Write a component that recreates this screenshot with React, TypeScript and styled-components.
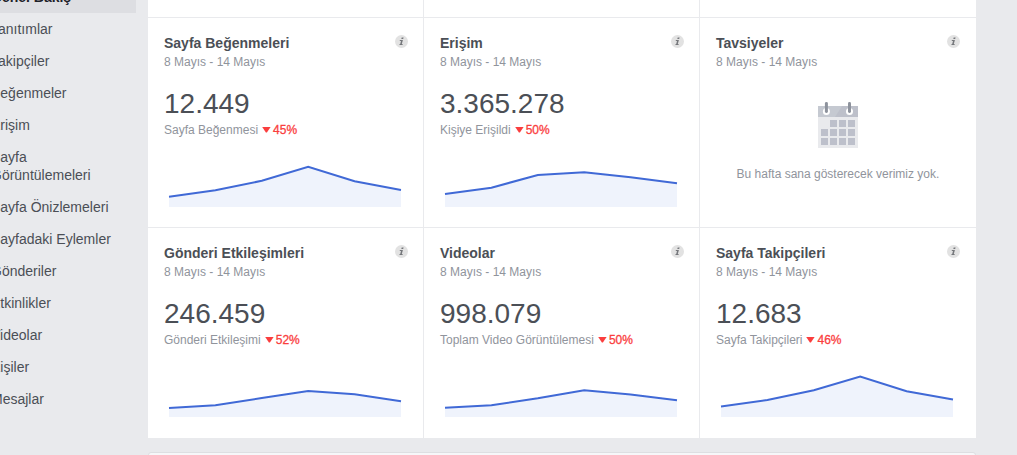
import React from "react";
import styled, { createGlobalStyle } from "styled-components";

const GlobalStyle = createGlobalStyle`
  * { box-sizing: border-box; }
  body {
    margin: 0;
    background: #e9ebee;
    font-family: "Liberation Sans", Arial, Helvetica, sans-serif;
    color: #4b4f56;
  }
`;

const Page = styled.div`
  display: flex;
  width: 1017px;
  height: 455px;
  overflow: hidden;
  background: #e9eaed;
`;

const Sidebar = styled.nav`
  flex: none;
  width: 157px;
  margin: -19px 12px 0 -21px;
`;

const SidebarItem = styled.div<{ $active?: boolean }>`
  padding: 7px 12px;
  font-size: 14px;
  line-height: 18px;
  color: ${(p) => (p.$active ? "#1d2129" : "#4b4f56")};
  font-weight: ${(p) => (p.$active ? 700 : 400)};
  background: ${(p) => (p.$active ? "#dddee2" : "transparent")};
`;

const Main = styled.main`
  flex: none;
  width: 828px;
`;

const CardGrid = styled.section`
  display: grid;
  grid-template-columns: repeat(3, 276px);
  grid-template-rows: 17px 210px 211px;
  background: #fff;
`;

const Cell = styled.div`
  border-right: 1px solid #e9eaed;
  &:nth-child(3n) {
    border-right: 0;
  }
`;

const Card = styled(Cell)`
  display: flex;
  flex-direction: column;
  border-top: 1px solid #e9eaed;
  padding: 16px 15px 0 16px;
  &:nth-child(3n) {
    padding-right: 16px;
  }
`;

const CardHeader = styled.header`
  display: flex;
  justify-content: space-between;
  height: 18px;
`;

const Title = styled.h3`
  margin: 0;
  font-size: 14px;
  line-height: 18px;
  font-weight: 700;
`;

const InfoSvg = styled.svg`
  display: block;
  margin-top: 1px;
`;

const Period = styled.div`
  font-size: 12px;
  line-height: 20px;
  color: #90949c;
`;

const Value = styled.div`
  margin-top: 16px;
  font-size: 28px;
  line-height: 32px;
`;

const Caption = styled.div`
  display: flex;
  align-items: center;
  font-size: 12px;
  line-height: 20px;
  color: #90949c;
`;

const Triangle = styled.svg`
  margin: 0 2px 0 4px;
`;

const Change = styled.span`
  color: #fa3e3e;
  -webkit-text-stroke: 0.3px #fa3e3e;
`;

const Chart = styled.svg`
  display: block;
  margin: 17px 0 0 5px;
  overflow: visible;
`;

const Empty = styled.div`
  display: flex;
  flex-direction: column;
  align-items: center;
  margin-top: 30px;
  font-size: 12px;
  line-height: 20px;
  color: #90949c;
`;

const EmptyText = styled.div`
  margin-top: 16px;
`;

const NextPanel = styled.section`
  height: 40px;
  margin-top: 14px;
  border: 1px solid #dddfe2;
  border-radius: 3px;
  background: #f6f7f9;
`;

const InfoIcon = () => (
  <InfoSvg width="13" height="13" viewBox="0 0 13 13">
    <circle cx="6.5" cy="6.5" r="6.5" fill="#e2e2e2" />
    <path d="M6.7 2.4h1.9l-.4 1.6H6.3z" fill="#75777b" />
    <path d="M4.9 5h3L6.8 9h.9l-.2.9H4.4l.2-.8h.6L6 5.9H4.7z" fill="#75777b" />
  </InfoSvg>
);

const squares = [
  [12, 18], [21, 18], [30, 18],
  [3, 27], [12, 27], [21, 27], [30, 27],
  [3, 36], [12, 36], [21, 36], [30, 36],
];

const CalendarIcon = () => (
  <svg width="40" height="46" viewBox="0 0 40 46">
    <rect y="4" width="40" height="42" fill="#e9eaed" />
    <rect y="4" width="40" height="11" fill="#bdc0ca" />
    <path d="M0 4h24L17 15H0z" fill="#c5c9d1" />
    {squares.map(([x, y]) => (
      <rect key={`${x}-${y}`} x={x} y={y} width="7" height="7" fill="#bdc0cb" />
    ))}
    {[8.4, 31.5].map((x) => (
      <g key={x}>
        <circle cx={x} cy="9.6" r="3.5" fill="#fff" />
        <rect x={x - 1.5} y="0" width="3" height="11" rx="1.4" fill="#8d929c" />
      </g>
    ))}
  </svg>
);

const Sparkline = ({ points }: { points: number[] }) => {
  const line = points.map((y, i) => `${(i * 232) / 5},${y}`).join(" ");
  return (
    <Chart width="232" height="50" viewBox="0 0 232 50">
      <polygon points={`0,50 ${line} 232,50`} fill="#eff3fc" />
      <polyline points={line} fill="none" stroke="#4069d6" strokeWidth="2" />
    </Chart>
  );
};

type Metric = {
  title: string;
  value?: string;
  label?: string;
  change?: string;
  points?: number[];
};

const metrics: Metric[] = [
  { title: "Sayfa Beğenmeleri", value: "12.449", label: "Sayfa Beğenmesi", change: "45%", points: [39.7, 33.2, 23.8, 9.7, 24.3, 33] },
  { title: "Erişim", value: "3.365.278", label: "Kişiye Erişildi", change: "50%", points: [37, 30.7, 18, 15.3, 20.2, 26.2] },
  { title: "Tavsiyeler" },
  { title: "Gönderi Etkileşimleri", value: "246.459", label: "Gönderi Etkileşimi", change: "52%", points: [41, 38.3, 31, 24.1, 27.3, 34.3] },
  { title: "Videolar", value: "998.079", label: "Toplam Video Görüntülemesi", change: "50%", points: [40.8, 38.2, 31.3, 23.3, 27.4, 33.3] },
  { title: "Sayfa Takipçileri", value: "12.683", label: "Sayfa Takipçileri", change: "46%", points: [39.5, 33, 23.3, 9.5, 24.3, 32.5] },
];

const MetricCard = ({ title, value, label, change, points }: Metric) => (
  <Card>
    <CardHeader>
      <Title>{title}</Title>
      <InfoIcon />
    </CardHeader>
    <Period>8 Mayıs - 14 Mayıs</Period>
    {points ? (
      <>
        <Value>{value}</Value>
        <Caption>
          {label}
          <Triangle width="9" height="6" viewBox="0 0 9 6">
            <path d="M0.2 0h8.4L4.9 5.6h-1z" fill="#fa3e3e" />
          </Triangle>
          <Change>{change}</Change>
        </Caption>
        <Sparkline points={points} />
      </>
    ) : (
      <Empty>
        <CalendarIcon />
        <EmptyText>Bu hafta sana gösterecek verimiz yok.</EmptyText>
      </Empty>
    )}
  </Card>
);

const navItems = [
  "Genel Bakış", "Tanıtımlar", "Takipçiler", "Beğenmeler", "Erişim",
  "Sayfa Görüntülemeleri", "Sayfa Önizlemeleri", "Sayfadaki Eylemler",
  "Gönderiler", "Etkinlikler", "Videolar", "Kişiler", "Mesajlar",
];

export default function App() {
  return (
    <>
      <GlobalStyle />
      <Page>
        <Sidebar>
          {navItems.map((item, i) => (
            <SidebarItem key={item} $active={i === 0}>{item}</SidebarItem>
          ))}
        </Sidebar>
        <Main>
          <CardGrid>
            <Cell />
            <Cell />
            <Cell />
            {metrics.map((m) => (
              <MetricCard key={m.title} {...m} />
            ))}
          </CardGrid>
          <NextPanel />
        </Main>
      </Page>
    </>
  );
}
